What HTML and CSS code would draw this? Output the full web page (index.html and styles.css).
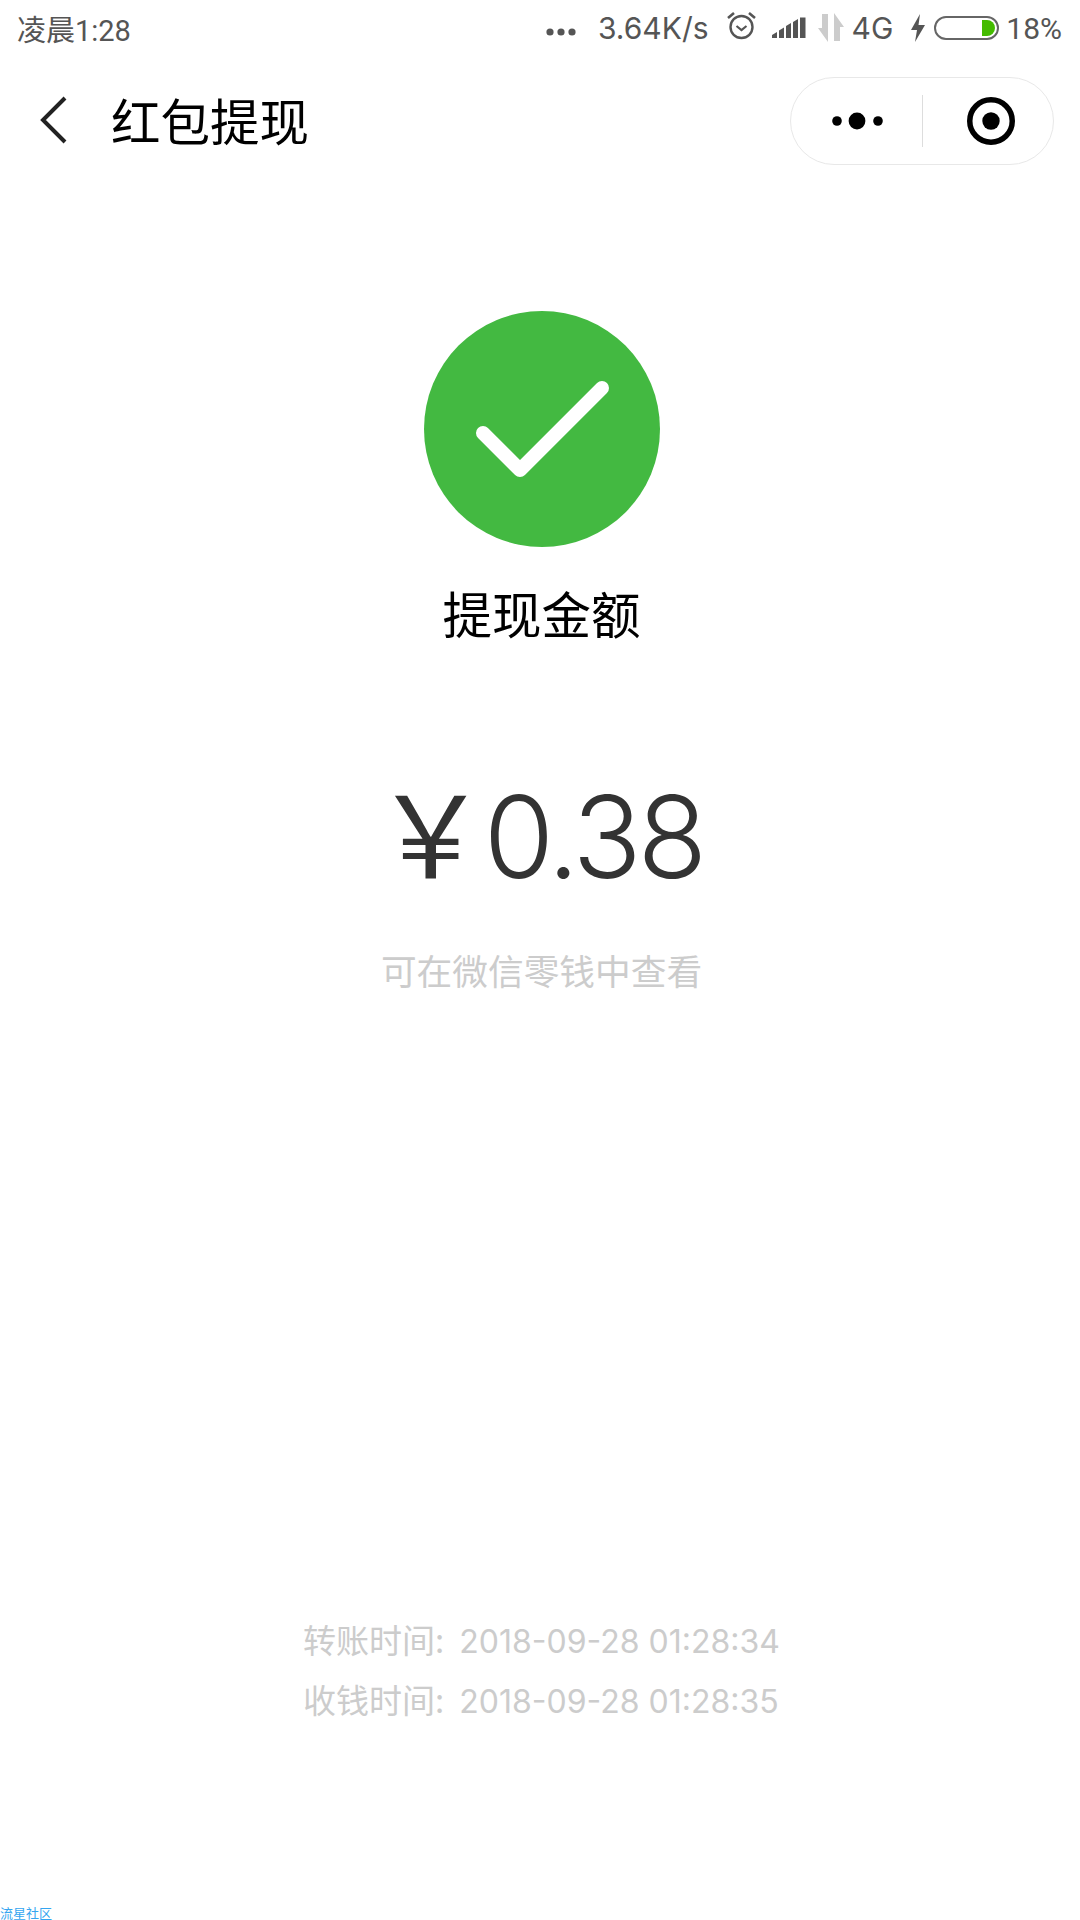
FILE: index.html
```html
<!DOCTYPE html>
<html lang="zh-CN">
<head>
    <meta charset="UTF-8">
    <meta name="viewport" content="width=device-width, initial-scale=1.0">
    <title>红包提现</title>
    <link rel="stylesheet" href="styles.css">
</head>
<body>
    <div class="status-bar">
        <div class="status-time">凌晨1:28</div>
        <div class="status-right">
            <svg class="ic-dots" width="30" height="8" viewBox="0 0 30 8"><circle cx="4" cy="4" r="3.6" fill="#555"/><circle cx="15" cy="4" r="3.6" fill="#555"/><circle cx="26" cy="4" r="3.6" fill="#555"/></svg>
            <span class="speed">3.64K/s</span>
            <svg class="ic-alarm" width="31" height="31" viewBox="0 0 31 31" fill="none" stroke="#555"><circle cx="15.5" cy="17" r="11" stroke-width="2.4"/><path d="M10.5 16l5 4 5-4" stroke-width="2.2"/><path d="M2 8l6-5M29 8l-6-5" stroke-width="2.6"/></svg>
            <svg class="ic-signal" width="34" height="24" viewBox="0 0 34 24" fill="#555"><path d="M0 19l5-3v6H0zM7 14.5l5-3V22H7zM14 10l5-3v15h-5zM21 6l5-3v19h-5zM28 1.500h5.500V22H28z"/></svg>
            <svg class="ic-arrows" width="26" height="30" viewBox="0 0 26 30"><path d="M0 15h4V1h6v14v14z" fill="#ccc"/><path d="M16 0l10 14h-4v14h-6z" fill="#ccc"/></svg>
            <span class="net">4G</span>
            <svg class="ic-bolt" width="16" height="28" viewBox="0 0 16 28"><path d="M10 0L1 16h6l-2 12 10-17H8.500z" fill="#555"/></svg>
            <div class="battery"><div class="battery-fill"></div></div>
            <span class="percent">18%</span>
        </div>
    </div>

    <div class="nav-bar">
        <svg class="ic-back" width="30" height="50" viewBox="0 0 30 50" fill="none"><path d="M26 3L4 25l22 22" stroke="#222" stroke-width="4"/></svg>
        <div class="nav-title">红包提现</div>
        <div class="capsule">
            <div class="capsule-side">
                <svg width="52" height="20" viewBox="0 0 52 20"><circle cx="6" cy="10" r="4.800" fill="#000"/><circle cx="26" cy="10" r="8.400" fill="#000"/><circle cx="47" cy="10" r="4.800" fill="#000"/></svg>
            </div>
            <div class="capsule-line"></div>
            <div class="capsule-side target">
                <svg width="48" height="48" viewBox="0 0 48 48"><circle cx="24" cy="24" r="21.250" fill="none" stroke="#000" stroke-width="5.500"/><circle cx="24" cy="24" r="8.700" fill="#000"/></svg>
            </div>
        </div>
    </div>

    <div class="main">
        <svg class="ic-ok" width="236" height="236" viewBox="0 0 236 236"><circle cx="118" cy="118" r="118" fill="#43b941"/><path d="M59 122l37 37 82-82" fill="none" stroke="#fff" stroke-width="14" stroke-linecap="round" stroke-linejoin="round"/></svg>
        <div class="label">提现金额</div>
        <div class="amount"><span class="yen">￥</span>0.38</div>
        <div class="hint">可在微信零钱中查看</div>
        <div class="times">
            <div><span class="time-label">转账时间:</span>2018-09-28 01:28:34</div>
            <div><span class="time-label">收钱时间:</span>2018-09-28 01:28:35</div>
        </div>
    </div>

    <div class="watermark">流星社区</div>
</body>
</html>
```

FILE: styles.css
```css
body {
    margin: 0;
    width: 1080px;
    height: 1920px;
    background-color: #fff;
    font-family: Roboto, "Noto Sans CJK SC", sans-serif;
    display: flex;
    flex-direction: column;
    overflow: hidden;
}
.status-bar {
    height: 56px;
    display: flex;
    justify-content: space-between;
    align-items: center;
    padding: 0 18px 0 17px;
    color: #555;
    font-size: 29px;
}
.status-right {
    display: flex;
    align-items: center;
}
.ic-dots {
    margin-right: 22px;
    margin-top: 8px;
}
.speed {
    font-family: Inter, sans-serif;
    font-size: 30px;
    margin-right: 17px;
}
.ic-alarm {
    margin-right: 15px;
    margin-top: -6px;
}
.ic-signal {
    margin-right: 12px;
}
.ic-arrows {
    margin-right: 8px;
}
.net {
    font-family: Inter, sans-serif;
    font-size: 30px;
    margin-right: 17px;
}
.ic-bolt {
    margin-right: 8px;
}
.battery {
    box-sizing: border-box;
    width: 65px;
    height: 24px;
    border: 2px solid #666;
    border-radius: 12px;
    margin-right: 7px;
    padding: 2px;
    display: flex;
    justify-content: flex-end;
}
.battery-fill {
    width: 13px;
    background-color: #44bb00;
    border-radius: 0 9px 9px 0;
}
.percent {
    font-size: 30px;
}
.nav-bar {
    height: 130px;
    display: flex;
    align-items: center;
    padding: 0 26px 0 39px;
}
.ic-back {
    margin: -2px 42px 0 0;
}
.nav-title {
    font-size: 49.5px;
    color: #000;
    flex: 1;
    padding-bottom: 4px;
}
.capsule {
    box-sizing: border-box;
    width: 264px;
    height: 88px;
    border: 1px solid #e8e8e8;
    border-radius: 44px;
    display: flex;
    align-items: center;
}
.capsule-side {
    width: 131px;
    display: flex;
    justify-content: center;
}
.target {
    box-sizing: border-box;
    width: 130px;
    padding-left: 6px;
}
.capsule-line {
    width: 1px;
    height: 52px;
    background-color: #ddd;
}
.main {
    flex: 1;
    display: flex;
    flex-direction: column;
    align-items: center;
    padding: 125px 0 0 3px;
}
.label {
    font-size: 49.5px;
    color: #000;
    line-height: 64px;
    margin-top: 38px;
}
.amount {
    font-family: Inter, sans-serif;
    font-size: 114px;
    font-weight: 300;
    color: #333;
    line-height: 136px;
    margin-top: 120px;
    padding-right: 6px;
    letter-spacing: -4px;
}
.yen {
    font-family: "Noto Sans CJK SC", sans-serif;
    font-size: 114px;
    font-weight: 400;
    line-height: 1;
}
.hint {
    font-size: 35.7px;
    color: #ccc;
    line-height: 48px;
    margin-top: 44px;
}
.times {
    font-family: Inter, "Noto Sans CJK SC", sans-serif;
    font-size: 32px;
    color: #ccc;
    line-height: 60px;
    margin-top: 615px;
}
.time-label {
    font-family: "Noto Sans CJK SC", sans-serif;
    font-size: 33px;
    line-height: 1;
    margin-right: 15px;
}
.watermark {
    font-size: 13px;
    line-height: 16px;
    color: #35a5f0;
    height: 14px;
}
```
